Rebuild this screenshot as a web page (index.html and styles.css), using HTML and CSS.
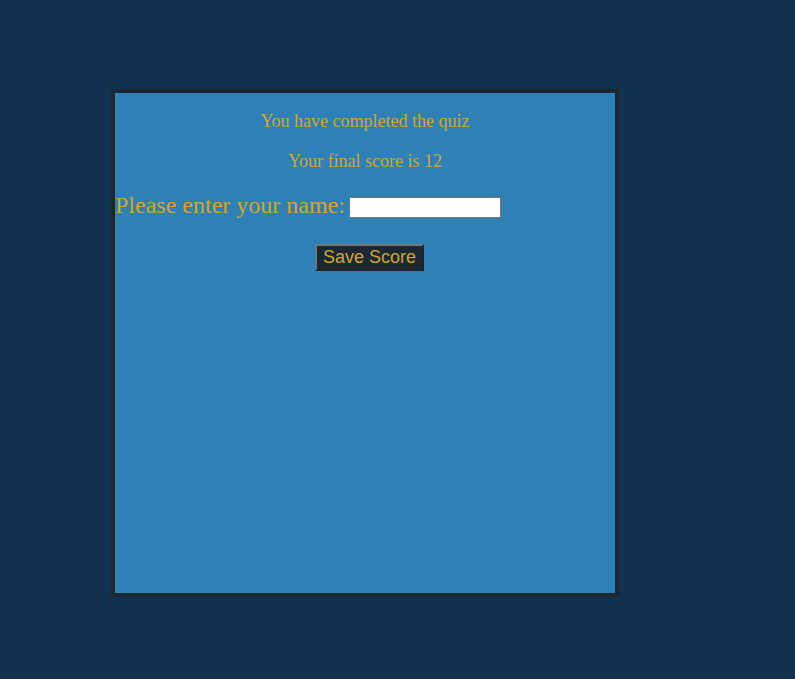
FILE: index.html
```html
<!DOCTYPE html>
<html>
<head>
<meta charset="utf-8">
<link rel="stylesheet" href="styles.css">
</head>
<body>
<div class="card">
  <p class="msg">You have completed the quiz</p>
  <p class="msg">Your final score is 12</p>
  <div class="name-row">
    <label class="name-label" for="name">Please enter your name:</label>
    <input class="name-input" id="name" type="text">
  </div>
  <div class="actions">
    <button class="save-btn">Save Score</button>
  </div>
</div>
</body>
</html>
```
FILE: styles.css
```css
html, body {
  margin: 0;
  padding: 0;
  background: #10324f;
  height: 100%;
}
body {
  font-family: "Liberation Serif", "Times New Roman", serif;
  padding-top: 89px;
  padding-left: 111px;
  box-sizing: border-box;
}
.card {
  width: 508px;
  height: 508px;
  box-sizing: border-box;
  border: 4px solid #1b2733;
  background: #2e80b5;
  color: #d4a52a;
  padding-top: 18px;
}
.msg {
  margin: 0 0 19px;
  text-align: center;
  font-size: 18px;
  line-height: 21px;
}
.name-row {
  display: flex;
  align-items: center;
  margin-top: 20px;
}
.name-label {
  font-size: 24px;
  line-height: 27px;
  margin-right: 4px;
}
.name-input {
  width: 152px;
  height: 21px;
  box-sizing: border-box;
  border: 1px solid #767676;
  background: #fff;
  margin: 4px 0 0;
  padding: 1px 2px;
}
.actions {
  text-align: center;
  margin-top: 25px;
}
.save-btn {
  font-family: "Liberation Sans", Arial, sans-serif;
  font-size: 18px;
  color: #d4a52a;
  background: #1c2833;
  border: 2px outset #767676;
  padding: 0;
  height: 27px;
  width: 109px;
  white-space: nowrap;
  box-sizing: border-box;
  margin-left: 9px;
}
```
